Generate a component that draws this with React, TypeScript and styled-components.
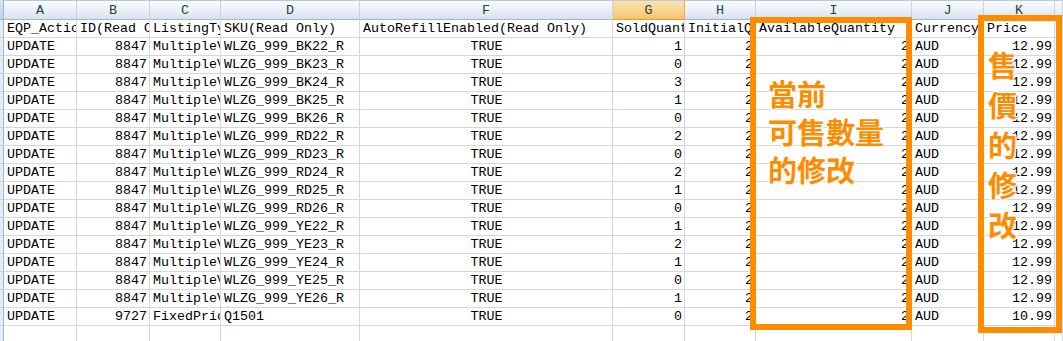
import React from "react";
import styled, { createGlobalStyle } from "styled-components";

type Align = "left" | "right" | "center";

const GlobalStyle = createGlobalStyle`
  html, body {
    margin: 0;
    padding: 0;
    background: #ffffff;
  }
  body {
    width: 1063px;
    height: 341px;
    overflow: hidden;
  }
`;

const columns: { letter: string; width: number; align: Align }[] = [
  { letter: "A", width: 73, align: "left" },
  { letter: "B", width: 73, align: "right" },
  { letter: "C", width: 71, align: "left" },
  { letter: "D", width: 139, align: "left" },
  { letter: "F", width: 253, align: "center" },
  { letter: "G", width: 72, align: "right" },
  { letter: "H", width: 71, align: "right" },
  { letter: "I", width: 156, align: "right" },
  { letter: "J", width: 72, align: "left" },
  { letter: "K", width: 71, align: "right" },
];

const titles = [
  "EQP_Action",
  "ID(Read Only)",
  "ListingType",
  "SKU(Read Only)",
  "AutoRefillEnabled(Read Only)",
  "SoldQuantity",
  "InitialQuantity",
  "AvailableQuantity",
  "Currency",
  "Price",
];

const variants: [string, number][] = [
  ["BK22", 1],
  ["BK23", 0],
  ["BK24", 3],
  ["BK25", 1],
  ["BK26", 0],
  ["RD22", 2],
  ["RD23", 0],
  ["RD24", 2],
  ["RD25", 1],
  ["RD26", 0],
  ["YE22", 1],
  ["YE23", 2],
  ["YE24", 1],
  ["YE25", 0],
  ["YE26", 1],
];

const dataRows: string[][] = [
  ...variants.map(([code, sold]) => [
    "UPDATE",
    "8847",
    "MultipleVariations",
    `WLZG_999_${code}_R`,
    "TRUE",
    String(sold),
    "2",
    "2",
    "AUD",
    "12.99",
  ]),
  ["UPDATE", "9727", "FixedPrice", "Q1501", "TRUE", "0", "2", "2", "AUD", "10.99"],
];

export default function App() {
  return (
    <>
      <GlobalStyle />
      <Page>
        <Sheet>
          <Corner />
          {columns.map((c) => (
            <ColHead key={c.letter} $selected={c.letter === "G"}>
              {c.letter}
            </ColHead>
          ))}
          <ColHeadRest />

          <RowHead />
          {titles.map((t, i) => (
            <Cell key={i} $align="left">
              {t}
            </Cell>
          ))}
          <Cell $align="left" />

          {dataRows.map((row, r) => (
            <React.Fragment key={r}>
              <RowHead />
              {row.map((v, i) => (
                <Cell key={i} $align={columns[i].align}>
                  {v}
                </Cell>
              ))}
              <Cell $align="left" />
            </React.Fragment>
          ))}

          <RowHead />
          {columns.map((c) => (
            <Cell key={c.letter} $align="left" />
          ))}
          <Cell $align="left" />
        </Sheet>

        <Marker $left={750} $top={17} $width={162} $height={313}>
          <NoteBlock>
            當前
            <br />
            可售數量
            <br />
            的修改
          </NoteBlock>
        </Marker>

        <Marker $left={978} $top={15} $width={84} $height={318}>
          <NoteColumn>
            售<br />價<br />的<br />修<br />改
          </NoteColumn>
        </Marker>
      </Page>
    </>
  );
}

const Page = styled.div`
  position: relative;
  width: 1063px;
  height: 341px;
  overflow: hidden;
  font-family: "Liberation Mono", "Noto Sans CJK TC", monospace;
  font-size: 13.33px;
  color: #000;
`;

const Sheet = styled.div`
  display: grid;
  grid-template-columns: 4px ${columns.map((c) => `${c.width}px`).join(" ")} 1fr;
  grid-template-rows: 20px repeat(18, 18px);
`;

const Corner = styled.div`
  box-sizing: border-box;
  background: linear-gradient(#d9e3f0, #c3d1e4);
  border-right: 1px solid #9eb6ce;
  border-bottom: 1px solid #9eb6ce;
`;

const ColHead = styled.div<{ $selected?: boolean }>`
  box-sizing: border-box;
  display: flex;
  align-items: center;
  justify-content: center;
  color: ${(p) => (p.$selected ? "#3b3b2c" : "#27413e")};
  background: ${(p) =>
    p.$selected
      ? "linear-gradient(#fbe3b2, #f8d48f 55%, #f5c36a)"
      : "linear-gradient(#f9fcfd, #e9eff6 55%, #d8e1ec)"};
  border-right: 1px solid ${(p) => (p.$selected ? "#f2a94a" : "#c5d2e1")};
  border-bottom: 1px solid ${(p) => (p.$selected ? "#f29536" : "#9eb6ce")};
  border-top: 1px solid #b9c9db;
`;

const ColHeadRest = styled(ColHead)``;

const RowHead = styled.div`
  box-sizing: border-box;
  background: #e4ecf7;
  border-right: 1px solid #9eb6ce;
  border-bottom: 1px solid #c5d2e1;
`;

const Cell = styled.div<{ $align: Align }>`
  box-sizing: border-box;
  display: flex;
  align-items: center;
  justify-content: ${(p) =>
    p.$align === "right" ? "flex-end" : p.$align === "center" ? "center" : "flex-start"};
  padding: 0 2px 0 3px;
  white-space: nowrap;
  overflow: hidden;
  line-height: 17px;
  border-right: 1px solid #d0d7e5;
  border-bottom: 1px solid #d0d7e5;
`;

const Marker = styled.div<{ $left: number; $top: number; $width: number; $height: number }>`
  position: absolute;
  box-sizing: border-box;
  left: ${(p) => p.$left}px;
  top: ${(p) => p.$top}px;
  width: ${(p) => p.$width}px;
  height: ${(p) => p.$height}px;
  border: 6px solid #ff8c00;
`;

const NoteText = styled.div`
  font-family: "Noto Sans CJK TC", "Noto Sans CJK SC", sans-serif;
  font-weight: 700;
  font-size: 29px;
  color: #ff8c00;
  text-shadow: 1px 1px 0 #fff, -1px -1px 0 #fff, 1px -1px 0 #fff, -1px 1px 0 #fff,
    0 0 3px #fff;
`;

const NoteBlock = styled(NoteText)`
  padding: 51px 0 0 12px;
  line-height: 38px;
`;

const NoteColumn = styled(NoteText)`
  padding: 23px 0 0 4px;
  line-height: 40px;
`;
